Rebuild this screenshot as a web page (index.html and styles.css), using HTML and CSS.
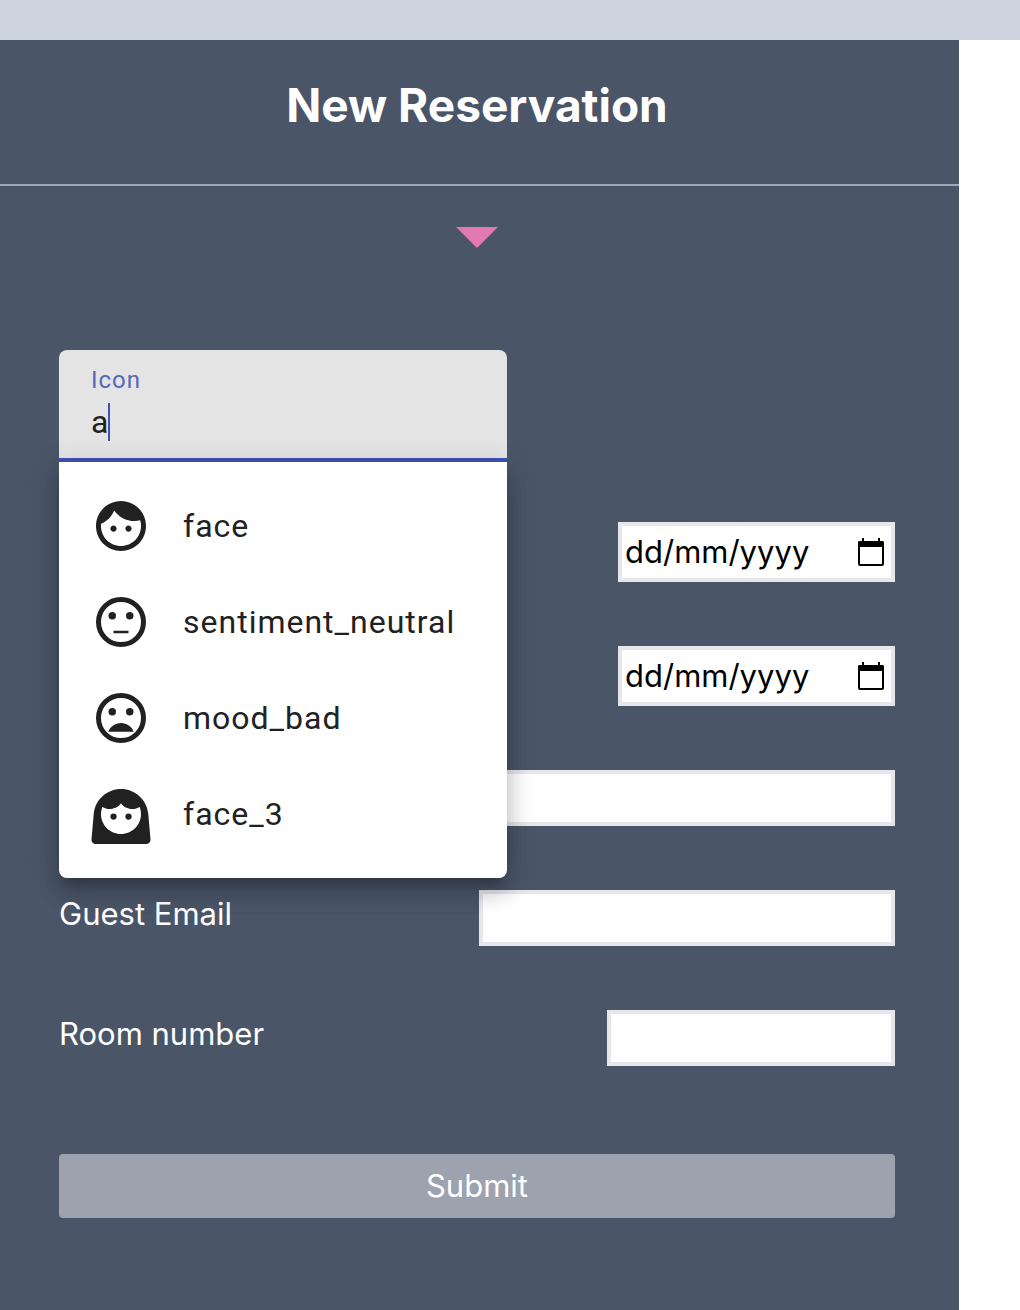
FILE: index.html
```html
<!DOCTYPE html>
<html lang="en">
<head>
<meta charset="utf-8">
<meta name="viewport" content="width=device-width, initial-scale=1">
<title>New Reservation</title>
<link rel="stylesheet" href="styles.css">
</head>
<body>
<div class="topbar"></div>
<main class="panel">
  <header class="panel-header">
    <h1 class="title">New Reservation</h1>
  </header>
  <form class="form">
    <svg class="marker" viewBox="0 0 42 21" aria-hidden="true"><path d="M0 0h42L21 21z"/></svg>

    <div class="picker">
      <div class="picker-field">
        <label class="picker-label" for="icon">Icon</label>
        <div class="picker-line">
          <input class="picker-input" id="icon" type="text" value="a" size="1" autocomplete="off">
          <span class="caret"></span>
        </div>
      </div>
      <ul class="menu" role="listbox" aria-label="Icon">
        <li class="option" role="option">
          <svg class="option-icon" viewBox="0 0 24 24" aria-hidden="true"><path d="M9 11.75c-.69 0-1.25.56-1.25 1.25s.56 1.25 1.25 1.25 1.25-.56 1.25-1.25-.56-1.25-1.25-1.25zm6 0c-.69 0-1.25.56-1.25 1.25s.56 1.25 1.25 1.25 1.25-.56 1.25-1.25-.56-1.25-1.25-1.25zM12 2C6.48 2 2 6.48 2 12s4.48 10 10 10 10-4.48 10-10S17.52 2 12 2zm0 18c-4.41 0-8-3.59-8-8 0-.29.02-.58.05-.86 2.36-1.05 4.23-2.98 5.21-5.37C11.07 8.33 14.05 10 17.42 10c.78 0 1.53-.09 2.25-.26.21.71.33 1.47.33 2.26 0 4.41-3.59 8-8 8z"/></svg>
          <span>face</span>
        </li>
        <li class="option" role="option">
          <svg class="option-icon" viewBox="0 0 24 24" aria-hidden="true"><circle class="ring" cx="12" cy="12" r="9"/><circle cx="8.5" cy="9.5" r="1.5"/><circle cx="15.5" cy="9.5" r="1.5"/><path d="M9 15.5h6v1H9z"/></svg>
          <span>sentiment_neutral</span>
        </li>
        <li class="option" role="option">
          <svg class="option-icon" viewBox="0 0 24 24" aria-hidden="true"><circle class="ring" cx="12" cy="12" r="9"/><circle cx="8.5" cy="9.5" r="1.5"/><circle cx="15.5" cy="9.5" r="1.5"/><path d="M12 14c-2.33 0-4.31 1.46-5.11 3.5h10.22C16.31 15.46 14.33 14 12 14z"/></svg>
          <span>mood_bad</span>
        </li>
        <li class="option" role="option">
          <svg class="option-icon" viewBox="0 0 24 24" aria-hidden="true"><path fill-rule="evenodd" d="M22.91 11.96C22.39 6.32 17.66 2 12 2S1.61 6.32 1.09 11.96L.2 22.1C.11 23.13.85 24 1.9 24h20.2c1.05 0 1.79-.87 1.7-1.9zM4 12c0-.99.18-1.94.51-2.81C5.41 9.7 6.43 10 7.5 10c1.82 0 3.54-.86 4.5-2.29C12.96 9.14 14.68 10 16.5 10c1.07 0 2.09-.3 2.99-.81.33.87.51 1.82.51 2.81 0 4.41-3.59 8-8 8s-8-3.59-8-8z"/><circle cx="9" cy="13" r="1.25"/><circle cx="15" cy="13" r="1.25"/></svg>
          <span>face_3</span>
        </li>
      </ul>
    </div>

    <div class="row">
      <div class="box date">
        <input class="date-input" type="text" placeholder="dd/mm/yyyy" aria-label="Check-in date">
        <svg class="calendar" viewBox="0 0 26 28" aria-hidden="true"><rect class="page" x="1" y="4" width="24" height="23" rx="1"/><path d="M0 9V5a2 2 0 0 1 2-2h2V0h2v3h14V0h2v3h2a2 2 0 0 1 2 2v4z"/></svg>
      </div>
    </div>
    <div class="row">
      <div class="box date">
        <input class="date-input" type="text" placeholder="dd/mm/yyyy" aria-label="Check-out date">
        <svg class="calendar" viewBox="0 0 26 28" aria-hidden="true"><rect class="page" x="1" y="4" width="24" height="23" rx="1"/><path d="M0 9V5a2 2 0 0 1 2-2h2V0h2v3h14V0h2v3h2a2 2 0 0 1 2 2v4z"/></svg>
      </div>
    </div>
    <div class="row">
      <input class="box text" type="text" aria-label="Guest name">
    </div>
    <div class="row">
      <label class="label" for="email">Guest Email</label>
      <input class="box text" id="email" type="email">
    </div>
    <div class="row">
      <label class="label" for="room">Room number</label>
      <input class="box text room" id="room" type="text">
    </div>
    <button class="submit" type="submit">Submit</button>
  </form>
</main>
</body>
</html>
```
FILE: styles.css
```css
* { box-sizing: border-box; }

body {
  margin: 0;
  min-height: 100vh;
  display: flex;
  flex-direction: column;
  background: #fff;
  color: #fff;
  font-family: Inter, "Liberation Sans", sans-serif;
  font-size: 31px;
  line-height: 48px;
}

input, button { font: inherit; }

.topbar { height: 40px; background: #cdd4e0; }

.panel {
  flex: 1;
  margin-right: 61px;
  background: #4a5568;
}

.panel-header {
  padding: 32px 64px 46px 59px;
  border-bottom: 2px solid #9ca9bb;
}

.title {
  margin: 0;
  font-size: 46px;
  font-weight: 700;
  line-height: 66px;
  text-align: center;
}

.form {
  display: flex;
  flex-direction: column;
  padding: 41px 64px 92px 59px;
}

.marker {
  align-self: center;
  width: 42px;
  height: 21px;
  margin-bottom: 102px;
  fill: #e479b2;
}

.picker {
  position: relative;
  width: 448px;
  margin-bottom: 60px;
  font-family: Roboto, "Liberation Sans", sans-serif;
  font-size: 32px;
  color: #212121;
}

.picker-field {
  height: 112px;
  padding: 16px 32px 0;
  border-bottom: 4px solid #3f51b5;
  border-radius: 8px 8px 0 0;
  background: #e4e4e4;
}

.picker-label {
  display: block;
  font-size: 24px;
  line-height: 28px;
  letter-spacing: 1px;
  color: #5767bb;
}

.picker-line {
  display: flex;
  align-items: center;
  height: 56px;
}

.picker-input {
  field-sizing: content;
  height: 40px;
  padding: 0;
  border: 0;
  outline: 0;
  background: transparent;
  color: inherit;
}

.caret { width: 2px; height: 38px; background: #3f51b5; }

.menu {
  position: absolute;
  top: 100%;
  left: 0;
  right: 0;
  z-index: 1;
  margin: 0;
  padding: 16px 0;
  list-style: none;
  border-radius: 0 0 8px 8px;
  background: #fff;
  box-shadow: 0 10px 10px -6px rgba(0, 0, 0, .2), 0 16px 20px 2px rgba(0, 0, 0, .14), 0 6px 28px 4px rgba(0, 0, 0, .12);
  clip-path: inset(-32px -48px -64px);
}

.option {
  display: flex;
  align-items: center;
  gap: 32px;
  height: 96px;
  padding: 0 32px;
  letter-spacing: 1px;
}

.option-icon { flex: none; width: 60px; height: 60px; fill: #212121; }
.ring { fill: none; stroke: #212121; stroke-width: 2; }

.row {
  display: flex;
  justify-content: space-between;
  align-items: flex-start;
  margin-bottom: 64px;
}

.box {
  margin-left: auto;
  border: 4px solid #e5e7eb;
  border-radius: 0;
  background: #fff;
  color: #000;
}

.text { width: 416px; height: 56px; }
.room { width: 288px; }

.date {
  display: flex;
  align-items: center;
  width: 277px;
  height: 60px;
  padding: 0 7px 0 3px;
}

.date-input {
  flex: 1;
  min-width: 0;
  padding: 0;
  border: 0;
  background: transparent;
}

.date-input::placeholder { color: #000; opacity: 1; }

.calendar { flex: none; width: 26px; height: 28px; }
.page { fill: none; stroke: #000; stroke-width: 2; }

.submit {
  height: 64px;
  margin-top: 24px;
  padding: 0;
  border: 0;
  border-radius: 4px;
  background: #9ca3af;
  color: #fff;
}
```
